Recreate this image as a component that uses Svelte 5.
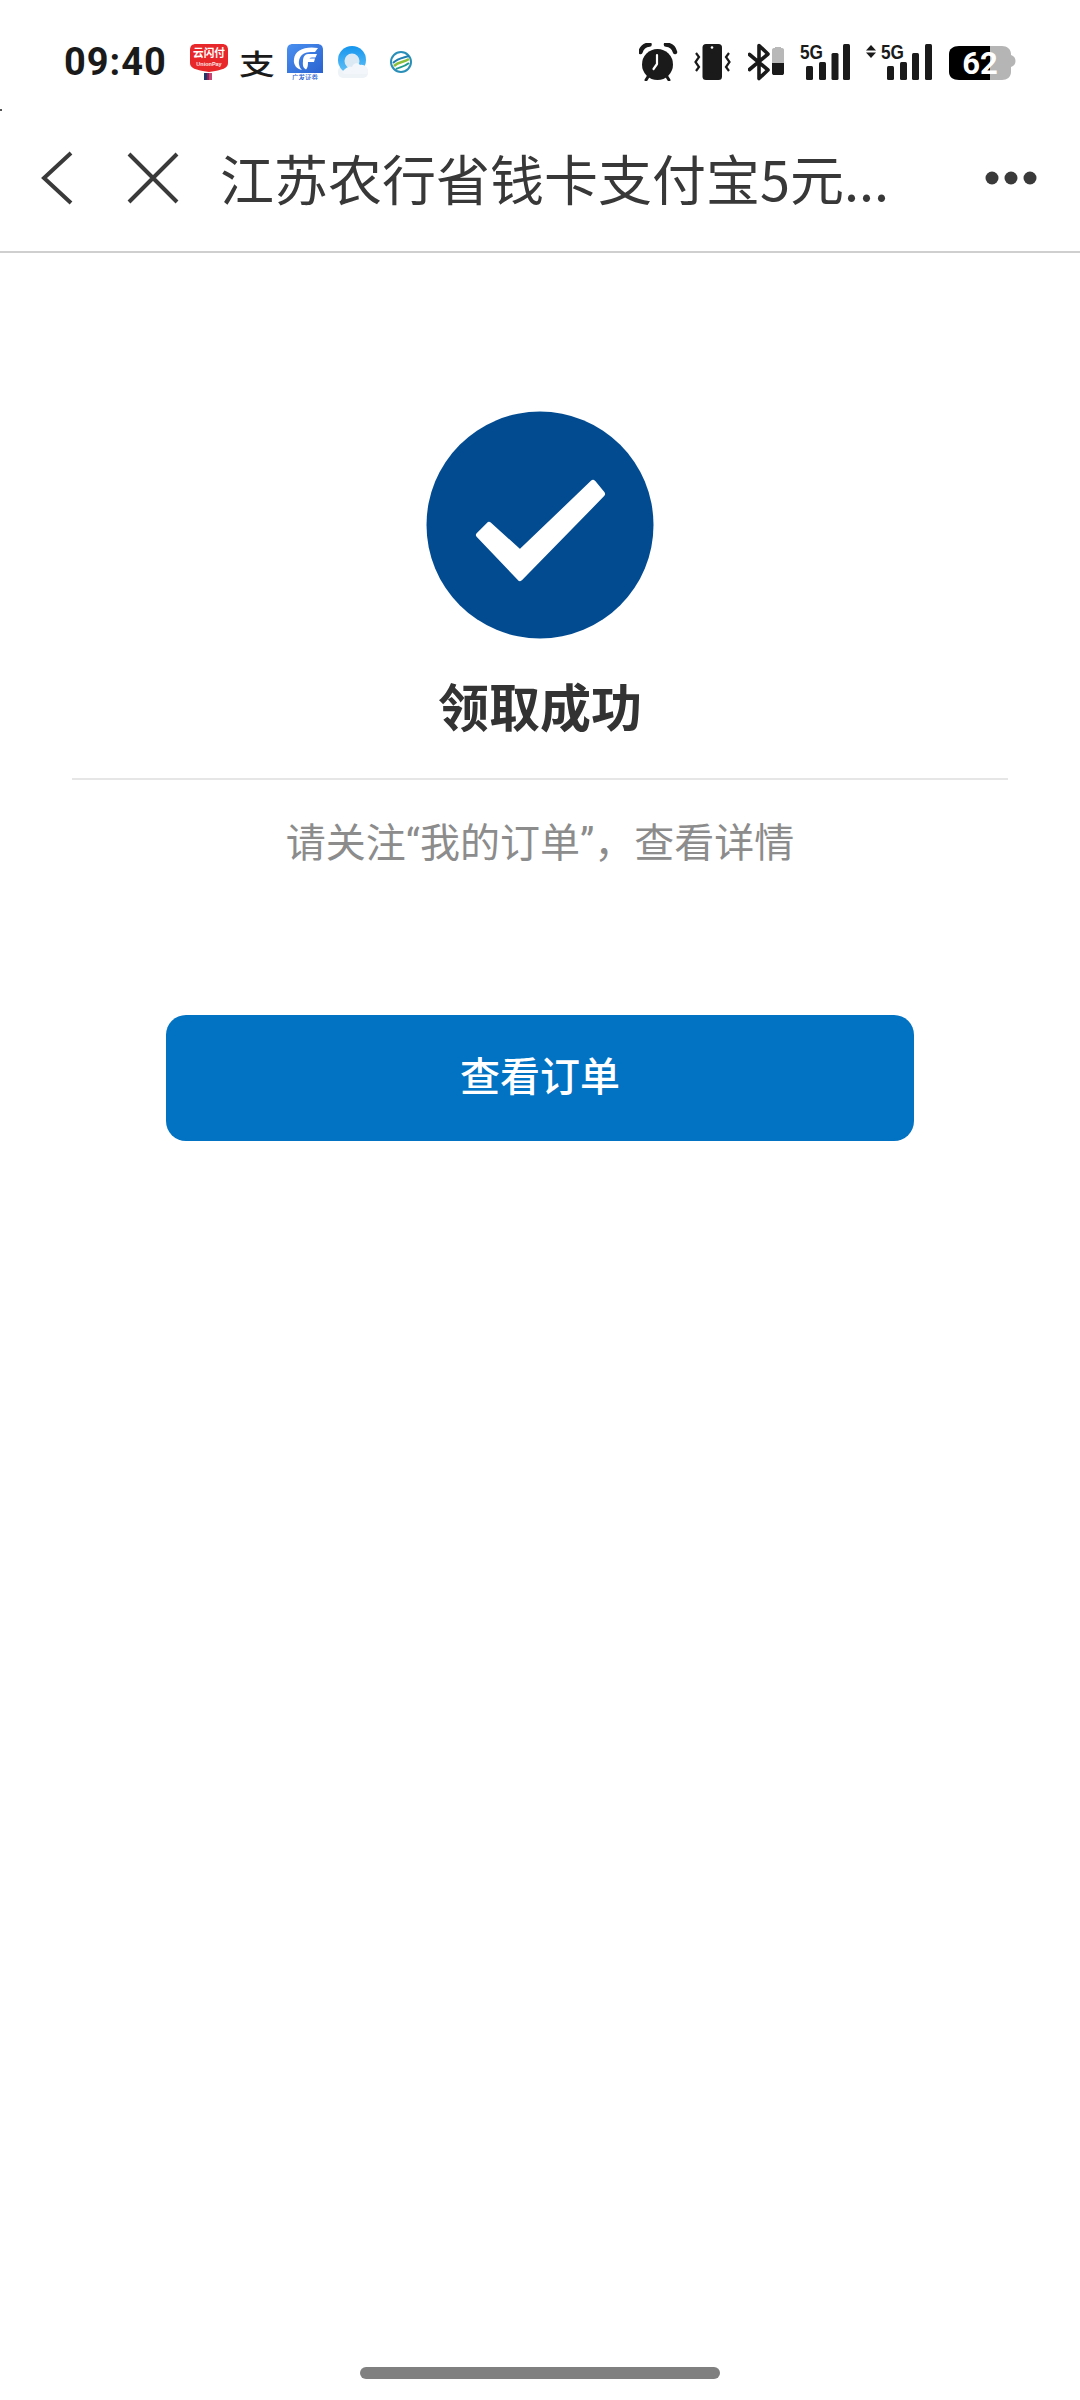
<script>
  const bars = [
    { x: 6, y: 23 },
    { x: 19, y: 19 },
    { x: 31.5, y: 10 },
    { x: 43, y: 1 }
  ];
  const bars2 = [
    { x: 21, y: 23 },
    { x: 34, y: 19 },
    { x: 46, y: 10 },
    { x: 59, y: 1 }
  ];
</script>

<div class="page">
  <i class="speck"></i>
  <header class="status">
    <span class="time">09:40</span>
    <div class="apps">
      <span class="slot">
        <svg width="38" height="36" viewBox="0 0 38 36">
          <path d="M6 0H32C36 0 38 2 38 6V19C38 24 33 26 19 28C5 26 0 24 0 19V6C0 2 2 0 6 0Z" fill="#e8272a" />
          <text x="19" y="13" class="up" text-anchor="middle" textLength="32" lengthAdjust="spacingAndGlyphs">云闪付</text>
          <text x="19" y="22" class="up-s" text-anchor="middle">UnionPay</text>
          <rect x="14" y="29" width="5" height="7" fill="#1b3a6b" />
          <rect x="17" y="29" width="5" height="7" fill="#b8174f" opacity=".8" />
        </svg>
      </span>
      <span class="slot">
        <svg class="tall" width="44" height="48" viewBox="0 0 44 48">
          <text x="22" y="37" class="ali" text-anchor="middle" textLength="36" lengthAdjust="spacingAndGlyphs">支</text>
        </svg>
      </span>
      <span class="slot">
        <svg width="36" height="36" viewBox="0 0 36 36">
          <defs>
            <linearGradient id="gf" x1="0" y1="0" x2="1" y2="1">
              <stop offset="0" stop-color="#4a90f0" />
              <stop offset="1" stop-color="#2a62d0" />
            </linearGradient>
          </defs>
          <path d="M6 0H30C34 0 36 2 36 6V29H0V6C0 2 2 0 6 0Z" fill="url(#gf)" />
          <path d="M31 4C18 2 8 6 7 15C6 21 10 25 15 26C11 22 11 16 14 12C17 8 22 8 28 8Z" fill="#fff" />
          <path d="M30 10H21C18 10 16 13 16 17C15.500 21 16 24 19 25.500C20.500 24 21 22 21 18H27L28 14.500H22.500C23 13.500 24 13.500 28.500 13.500Z" fill="#fff" />
          <text x="18" y="35.500" class="gf" text-anchor="middle" textLength="26" lengthAdjust="spacingAndGlyphs">广发证券</text>
        </svg>
      </span>
      <span class="slot">
        <svg width="30" height="32" viewBox="0 0 30 32">
          <defs>
            <linearGradient id="qb" x1="0" y1="0" x2="0" y2="1">
              <stop offset="0" stop-color="#1595ee" />
              <stop offset="1" stop-color="#65c3f7" />
            </linearGradient>
          </defs>
          <rect x="0" y="20" width="30" height="12" rx="5" fill="#eef3f8" />
          <circle cx="14" cy="14" r="14" fill="url(#qb)" />
          <circle cx="14" cy="15" r="7.500" fill="#dbe9f5" />
          <path d="M4 26C8 21 11 20 14 21C15 17 20 16 22 19C26 18 30 21 30 26C30 28 29 28 27 28H6Z" fill="#f3f7fb" />
        </svg>
      </span>
      <span class="slot">
        <svg width="24" height="24" viewBox="0 0 24 24" fill="none">
          <circle cx="12" cy="12" r="10" stroke="#2a8fb8" stroke-width="2" />
          <path d="M4 13C9 8 14 8 20 6" stroke="#1f7fb0" stroke-width="2" />
          <path d="M5 16C10 11 14 13 20 9" stroke="#8bbf3c" stroke-width="2.500" />
          <path d="M7 19C11 17 15 17 20 13" stroke="#1f9a8f" stroke-width="2" />
        </svg>
      </span>
    </div>

    <div class="sys">
      <svg width="39" height="38" viewBox="0 0 39 38">
        <path d="M1.500 9C2.500 5 6 2 10.500 1.500" fill="none" stroke="#1a1a1a" stroke-width="4.500" stroke-linecap="round" />
        <path d="M36 9C35 5 31.500 2 27 1.500" fill="none" stroke="#1a1a1a" stroke-width="4.500" stroke-linecap="round" />
        <circle cx="18.500" cy="21.500" r="15.500" fill="#1a1a1a" />
        <path d="M7 37L9.500 33M30 37L27.500 33" stroke="#1a1a1a" stroke-width="3" stroke-linecap="round" />
        <path d="M18 12V21L14.500 26" fill="none" stroke="#fff" stroke-width="2.200" stroke-linecap="round" stroke-linejoin="round" />
      </svg>

      <svg width="38" height="38" viewBox="0 0 38 38">
        <rect x="8.500" y="1" width="19.500" height="36" rx="3.500" fill="#1a1a1a" />
        <circle cx="18" cy="4.500" r="1.300" fill="#fff" />
        <path d="M2 10L5 14L1.500 19L5 24L2 28" fill="none" stroke="#1a1a1a" stroke-width="2.200" />
        <path d="M35 10L32 14L35.500 19L32 24L35 28" fill="none" stroke="#1a1a1a" stroke-width="2.200" />
      </svg>

      <svg width="36" height="38" viewBox="0 0 36 38">
        <path d="M1.500 11.500L20 27L11 35.500V2.500L20 11L1.500 26.500" fill="none" stroke="#1a1a1a" stroke-width="3.600" stroke-linejoin="round" stroke-linecap="round" />
        <path d="M24 7C24 5.500 25 5 27 5V4H33V5C35 5 36 5.500 36 7V20H24Z" fill="#b8b8b8" />
        <path d="M24 20H36V30C36 31.500 35 32 34 32H26C25 32 24 31.500 24 30Z" fill="#1a1a1a" />
      </svg>

      <svg width="50" height="46" viewBox="0 -4 50 46">
        <text x="0" y="15.500" class="g5" textLength="23" lengthAdjust="spacingAndGlyphs">5G</text>
        {#each bars as b}
          <rect x={b.x} y={b.y} width="7" height={37 - b.y} rx="1.500" fill="#1a1a1a" />
        {/each}
      </svg>

      <svg width="66" height="46" viewBox="0 -4 66 46">
        <path d="M5 2L10 7.500H0Z" fill="#1a1a1a" />
        <path d="M5 15L10 9.500H0Z" fill="#1a1a1a" />
        <text x="15" y="15.500" class="g5" textLength="23" lengthAdjust="spacingAndGlyphs">5G</text>
        {#each bars2 as b}
          <rect x={b.x} y={b.y} width="7" height={37 - b.y} rx="1.500" fill="#1a1a1a" />
        {/each}
      </svg>

      <svg width="68" height="38" viewBox="0 0 68 38">
        <path d="M42 3H54C59 3 63 6 63 11V12C66 13 67.500 15 67.500 18S66 23 63 24V29C63 34 59 37 54 37H42Z" fill="#b5b5b5" />
        <path d="M42 3H11C5 3 1 6 1 11V29C1 34 5 37 11 37H42Z" fill="#000" />
        <text x="32" y="31" class="batt" text-anchor="middle">62</text>
      </svg>
    </div>
  </header>

  <nav class="nav">
    <svg class="back" width="32" height="54" viewBox="0 0 32 54" fill="none">
      <path d="M30 2L3 27L30 52" stroke="#3a3a3a" stroke-width="4" />
    </svg>
    <svg class="close" width="52" height="52" viewBox="0 0 52 52" fill="none">
      <path d="M2 2L50 50M50 2L2 50" stroke="#3a3a3a" stroke-width="4" />
    </svg>
    <span class="title">江苏农行省钱卡支付宝5元...</span>
    <svg class="more" width="52" height="16" viewBox="0 0 52 16">
      <circle cx="7" cy="8" r="6.500" fill="#3a3a3a" />
      <circle cx="26" cy="8" r="6.500" fill="#3a3a3a" />
      <circle cx="45" cy="8" r="6.500" fill="#3a3a3a" />
    </svg>
  </nav>

  <main class="main">
    <svg class="ok" width="228" height="228" viewBox="0 0 228 228">
      <circle cx="114" cy="114" r="113.500" fill="#024b91" />
      <path d="M53 124L63 114L94 142L167 72L176 83L94 167Z" fill="#fff" stroke="#fff" stroke-width="6" stroke-linejoin="round" />
    </svg>
    <h1 class="head">领取成功</h1>
    <div class="rule"></div>
    <p class="sub">请关注“我的订单”，查看详情</p>
    <button class="cta">查看订单</button>
  </main>

  <footer class="home"><span class="pill"></span></footer>
</div>

<style>
  :global(body) {
    margin: 0;
    background: #fff;
  }
  .page {
    position: relative;
    display: flex;
    flex-direction: column;
    width: 1080px;
    height: 2400px;
    background: #fff;
    font-family: "Noto Sans CJK SC", "Noto Sans", sans-serif;
    overflow: hidden;
  }
  .speck {
    position: absolute;
    left: 0;
    top: 109px;
    width: 2px;
    height: 2px;
    background: #555;
  }
  .status {
    display: flex;
    align-items: center;
    box-sizing: border-box;
    height: 104px;
    padding: 20px 64px 0 64px;
  }
  .time {
    width: 101px;
    font-family: Roboto, "Liberation Sans", sans-serif;
    font-weight: 700;
    font-size: 38px;
    letter-spacing: 1px;
    color: #1a1a1a;
    line-height: 1;
    white-space: nowrap;
  }
  .apps {
    display: flex;
    align-items: center;
    margin-left: 20px;
  }
  .slot {
    display: flex;
    align-items: center;
    justify-content: center;
    width: 48px;
    height: 40px;
  }
  .up {
    font: 700 11px "Noto Sans CJK SC", sans-serif;
    fill: #fff;
  }
  .up-s {
    font: 700 5.500px "Liberation Sans", sans-serif;
    fill: #ffe5e5;
  }
  .ali {
    font: 500 28px "Noto Sans CJK SC", sans-serif;
    fill: #1a1a1a;
  }
  .tall {
    flex-shrink: 0;
  }
  .gf {
    font: 500 6.500px "Noto Sans CJK SC", sans-serif;
    fill: #2a62d0;
  }
  .sys {
    display: flex;
    align-items: center;
    gap: 16px;
    margin-left: auto;
  }
  .g5 {
    font: 700 20px "Liberation Sans", sans-serif;
    fill: #1a1a1a;
  }
  .batt {
    font: 700 31px Roboto, "Liberation Sans", sans-serif;
    fill: #fff;
  }
  .nav {
    display: flex;
    align-items: center;
    height: 147px;
    padding: 0 43px 0 41px;
    border-bottom: 2px solid #cfcfcf;
  }
  .close {
    margin-left: 54px;
  }
  .title {
    flex: 1;
    margin-left: 41px;
    font-size: 54px;
    line-height: 1;
    color: #383838;
    white-space: nowrap;
  }
  .main {
    flex: 1;
    display: flex;
    flex-direction: column;
    align-items: center;
    padding-top: 158px;
  }
  .head {
    margin: 30px 0 0;
    font-size: 51px;
    font-weight: 700;
    line-height: 72px;
    color: #333;
  }
  .rule {
    width: 936px;
    height: 2px;
    margin-top: 37px;
    background: #e6e6e6;
  }
  .sub {
    margin: 34px 0 0;
    font-family: Roboto, "Noto Sans CJK SC", sans-serif;
    font-size: 40px;
    line-height: 60px;
    color: #8c8c8c;
  }
  .cta {
    width: 748px;
    height: 126px;
    margin-top: 141px;
    padding: 0 0 8px;
    border: 0;
    border-radius: 20px;
    background: #0272c3;
    color: #fff;
    font-family: inherit;
    font-size: 40px;
    font-weight: 500;
  }
  .home {
    display: flex;
    justify-content: center;
    padding-bottom: 21px;
  }
  .pill {
    width: 360px;
    height: 12px;
    border-radius: 6px;
    background: #808080;
  }
</style>
